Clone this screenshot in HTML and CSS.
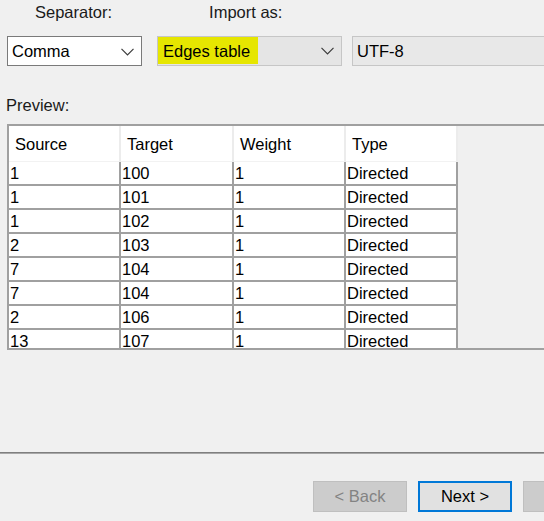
FILE: index.html
```html
<!DOCTYPE html>
<html>
<head>
<meta charset="utf-8">
<link rel="stylesheet" href="styles.css">
</head>
<body>
<div class="page">
  <div class="labels">
    <span class="lbl lbl-sep">Separator:</span>
    <span class="lbl lbl-imp">Import as:</span>
  </div>
  <div class="selects">
    <div class="combo combo-white">
      <span class="combo-text">Comma</span>
      <svg class="chev" width="13" height="8" viewBox="0 0 13 8"><polyline points="0.5,0.8 6.5,6.8 12.5,0.8" fill="none" stroke="#3c3c3c" stroke-width="1.2"/></svg>
    </div>
    <div class="combo combo-gray">
      <span class="combo-text hl">Edges table</span>
      <svg class="chev" width="13" height="8" viewBox="0 0 13 8"><polyline points="0.5,0.8 6.5,6.8 12.5,0.8" fill="none" stroke="#3c3c3c" stroke-width="1.2"/></svg>
    </div>
    <div class="combo combo-text-box">
      <span class="combo-text">UTF-8</span>
    </div>
  </div>
  <div class="preview-label">Preview:</div>
  <div class="grid">
    <table class="tbl">
      <thead>
        <tr><th class="c1">Source</th><th class="c2">Target</th><th class="c3">Weight</th><th class="c4">Type</th></tr>
      </thead>
      <tbody>
        <tr><td>1</td><td>100</td><td>1</td><td>Directed</td></tr>
        <tr><td>1</td><td>101</td><td>1</td><td>Directed</td></tr>
        <tr><td>1</td><td>102</td><td>1</td><td>Directed</td></tr>
        <tr><td>2</td><td>103</td><td>1</td><td>Directed</td></tr>
        <tr><td>7</td><td>104</td><td>1</td><td>Directed</td></tr>
        <tr><td>7</td><td>104</td><td>1</td><td>Directed</td></tr>
        <tr><td>2</td><td>106</td><td>1</td><td>Directed</td></tr>
        <tr><td>13</td><td>107</td><td>1</td><td>Directed</td></tr>
      </tbody>
    </table>
  </div>
  <div class="divider"></div>
  <div class="buttons">
    <button class="btn btn-disabled">&lt; Back</button>
    <button class="btn btn-default">Next &gt;</button>
    <button class="btn btn-plain"></button>
  </div>
</div>
</body>
</html>
```

FILE: styles.css
```css
html, body {
  margin: 0;
  padding: 0;
  background: #f0f0f0;
}
body {
  width: 544px;
  height: 521px;
  overflow: hidden;
  font-family: "Liberation Sans", Arial, sans-serif;
  font-size: 16.5px;
  color: #000;
}
.page {
  display: flex;
  flex-direction: column;
  width: 544px;
  overflow: hidden;
}
.labels {
  display: flex;
  height: 25px;
  align-items: center;
  color: #1a1a1a;
}
.lbl-sep { margin-left: 35px; }
.lbl-imp { margin-left: 97px; }
.selects {
  display: flex;
  margin-top: 11px;
  height: 30px;
  overflow: hidden;
}
.combo {
  box-sizing: border-box;
  height: 30px;
  display: flex;
  align-items: center;
  justify-content: space-between;
  padding: 1px 7px 0 4px;
}
.combo-white {
  margin-left: 7px;
  width: 135px;
  flex: none;
  background: #fff;
  border: 1px solid #7a7a7a;
}
.combo-gray {
  margin-left: 15px;
  width: 185px;
  flex: none;
  background: #e5e5e5;
  border: 1px solid #c6c6c6;
  padding: 0 7px 0 0;
  align-items: flex-start;
}
.combo-gray .chev { align-self: center; }
.hl {
  background: #e6e600;
  display: block;
  height: 27px;
  line-height: 29px;
  padding: 0 8px 0 5px;
}
.combo-text-box {
  margin-left: 10px;
  flex: none;
  width: 200px;
  background: #e8e8e8;
  border: 1px solid #c6c6c6;
  justify-content: flex-start;
}
.preview-label {
  margin-top: 31px;
  margin-left: 6px;
  height: 17px;
  line-height: 17px;
  color: #1a1a1a;
}
.grid {
  margin-top: 10px;
  margin-left: 7px;
  height: 222px;
  border-top: 2px solid #a0a0a0;
  border-left: 2px solid #a0a0a0;
  border-bottom: 2px solid #a0a0a0;
  overflow: hidden;
  background: #f0f0f0;
}
.tbl {
  border-collapse: separate;
  border-spacing: 0;
  table-layout: fixed;
  width: 449px;
}
.tbl th {
  background: #fff;
  font-weight: normal;
  text-align: left;
  height: 36px;
  padding: 2px 0 0 6px;
  border-right: 2px solid #ececec;
  border-bottom: 1px solid #f2f2f2;
  box-sizing: border-box;
}
.tbl .c1 { width: 112px; }
.tbl .c2 { width: 113px; }
.tbl .c3 { width: 112px; }
.tbl .c4 { width: 112px; }
.tbl td {
  background: #fff;
  height: 24px;
  padding: 1px 0 0 1px;
  border-right: 2px solid #a0a0a0;
  border-bottom: 2px solid #a0a0a0;
  box-sizing: border-box;
  line-height: 21px;
  white-space: nowrap;
}
.divider {
  margin-top: 102px;
  height: 1px;
  border-top: 1px solid #7f7f7f;
  background: #a8a8a8;
}
.buttons {
  display: flex;
  margin-top: 27px;
  padding-left: 313px;
  gap: 11px;
  overflow: hidden;
}
.btn {
  box-sizing: border-box;
  width: 94px;
  height: 31px;
  flex: none;
  font-family: "Liberation Sans", Arial, sans-serif;
  font-size: 16.5px;
  padding: 0;
  background: #e1e1e1;
  border: 1px solid #adadad;
  color: #000;
}
.btn-disabled {
  background: #cccccc;
  border-color: #bfbfbf;
  color: #838383;
}
.btn-default {
  border: 2px solid #0078d7;
  background: #e1e1e1;
}
.btn-plain {
  background: #cccccc;
  border-color: #bfbfbf;
}
```
